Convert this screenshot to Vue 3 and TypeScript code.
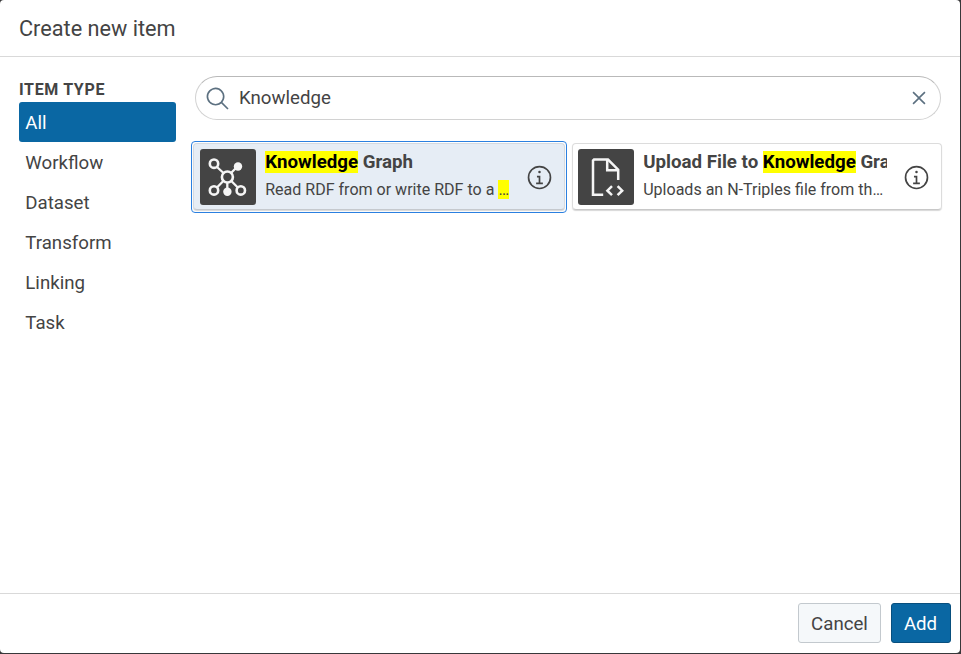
<script setup lang="ts">
import { ref } from 'vue'

interface Part { text: string; mark?: boolean }
interface Item { id: string; icon: 'graph' | 'file'; title: Part[]; description: Part[] }

const types: string[] = ['All', 'Workflow', 'Dataset', 'Transform', 'Linking', 'Task']
const activeType = ref('All')
const query = ref('Knowledge')
const selected = ref('graph')

const items: Item[] = [
  {
    id: 'graph',
    icon: 'graph',
    title: [{ text: 'Knowledge', mark: true }, { text: ' Graph' }],
    description: [{ text: 'Read RDF from or write RDF to a ' }, { text: '…', mark: true }],
  },
  {
    id: 'upload',
    icon: 'file',
    title: [{ text: 'Upload File to ' }, { text: 'Knowledge', mark: true }, { text: ' Graph' }],
    description: [{ text: 'Uploads an N-Triples file from th…' }],
  },
]
</script>

<template>
  <div class="backdrop">
    <section class="dialog" role="dialog" aria-label="Create new item">
      <header class="header"><h1>Create new item</h1></header>
      <main class="content">
        <nav class="types">
          <h2>Item type</h2>
          <button
            v-for="type in types"
            :key="type"
            class="type"
            :class="{ active: type === activeType }"
            @click="activeType = type"
          >{{ type }}</button>
        </nav>
        <div class="results">
          <label class="search">
            <svg class="search-icon" viewBox="0 0 32 32">
              <path d="M29,27.5859l-7.5521-7.5521a11.0177,11.0177,0,1,0-1.4141,1.4141L27.5859,29ZM4,13a9,9,0,1,1,9,9A9.01,9.01,0,0,1,4,13Z" />
            </svg>
            <input v-model="query" type="text" />
            <svg class="clear-icon" viewBox="0 0 32 32" @click="query = ''">
              <path d="M24 9.4L22.6 8 16 14.6 9.4 8 8 9.4 14.6 16 8 22.6 9.4 24 16 17.4 22.6 24 24 22.6 17.4 16z" />
            </svg>
          </label>
          <div class="cards">
            <div
              v-for="item in items"
              :key="item.id"
              class="slot"
              :class="{ selected: item.id === selected }"
              @click="selected = item.id"
            >
              <article class="card">
                <div class="tile">
                  <svg v-if="item.icon === 'graph'" viewBox="0 0 56 56">
                    <g fill="none" stroke="#f5f5f5" stroke-width="2.300">
                      <path d="M17 18l6.500 6M31 24l5-5M23.300 32L17 38.500M31.300 32l6.500 6.500M27.300 33.500V40" />
                      <circle cx="14" cy="14.700" r="4.200" stroke-width="2.600" />
                      <circle cx="14" cy="41.400" r="4.200" stroke-width="2.600" />
                      <circle cx="40.800" cy="41.400" r="4.200" stroke-width="2.600" />
                      <circle cx="27.400" cy="28" r="5.500" stroke-width="2.600" />
                    </g>
                    <g fill="#f5f5f5">
                      <circle cx="38" cy="17.500" r="4.200" />
                      <circle cx="27.400" cy="42.700" r="4.200" />
                    </g>
                  </svg>
                  <svg v-else viewBox="0 0 56 56">
                    <g fill="none" stroke="#f5f5f5" stroke-width="2.500">
                      <path d="M25.200 45.800H15V11.500L16 10.500H30L40.200 20.700V31" />
                      <path d="M29.200 10.500V21.300H40.200" />
                      <path d="M34 37.200L29.400 41.700L34 46.200M39.600 37.200L44.200 41.700L39.600 46.200" />
                    </g>
                  </svg>
                </div>
                <div class="text">
                  <h3><template v-for="(part, i) in item.title" :key="i"><mark v-if="part.mark">{{ part.text }}</mark><template v-else>{{ part.text }}</template></template></h3>
                  <p><template v-for="(part, i) in item.description" :key="i"><mark v-if="part.mark">{{ part.text }}</mark><template v-else>{{ part.text }}</template></template></p>
                </div>
                <svg class="info" viewBox="0 0 32 32">
                  <path d="M17 22L17 14 13 14 13 16 15 16 15 22 12 22 12 24 20 24 20 22zM16 8a1.5 1.5 0 101.5 1.5A1.5 1.5 0 0016 8z" />
                  <path d="M16,30A14,14,0,1,1,30,16,14,14,0,0,1,16,30ZM16,4A12,12,0,1,0,28,16,12,12,0,0,0,16,4Z" />
                </svg>
              </article>
            </div>
          </div>
        </div>
      </main>
      <footer class="footer">
        <button class="button">Cancel</button>
        <button class="button primary">Add</button>
      </footer>
    </section>
  </div>
</template>

<style>
body { margin: 0; background: #38383a; }
</style>

<style scoped>
.backdrop {
  box-sizing: border-box;
  height: 100vh;
  padding: 0 1px 1px 0;
  background: #38383a;
  color: #444;
  font-family: Roboto, "Liberation Sans", sans-serif;
}
.backdrop *, .backdrop *::before { box-sizing: border-box; }
h1, h2, h3, p { margin: 0; }
button, input { font: inherit; color: inherit; }
.dialog {
  display: flex;
  flex-direction: column;
  height: 100%;
  border-radius: 4px;
  background: #fff;
}
.header {
  display: flex;
  align-items: center;
  height: 57px;
  padding: 2px 19px 0;
  border-bottom: 1px solid #d9d9d9;
}
h1 { font-size: 21.7px; font-weight: 400; line-height: 28px; }
.content { flex: 1; display: flex; gap: 15px; padding: 19px 17px 0 19px; }
.types { width: 157px; }
h2 {
  padding-top: 2px;
  height: 26px;
  font-size: 16px;
  font-weight: 700;
  line-height: 23px;
  letter-spacing: .65px;
  text-transform: uppercase;
}
.type {
  display: block;
  width: 100%;
  height: 40px;
  padding: 2px 6.300px 0;
  border: 0;
  border-radius: 3px;
  background: none;
  font-size: 18.67px;
  text-align: left;
}
.type.active { background: #0a67a3; color: #fff; }
.results { flex: 1; min-width: 0; }
.search {
  display: flex;
  align-items: center;
  height: 44px;
  margin: 0 2px 0 4px;
  padding: 0 8px 0 9px;
  border: 1px solid #d2d2d2;
  border-top-color: #b9b9b9;
  border-radius: 22px;
}
.search-icon { width: 26px; height: 26px; margin-top: 1px; fill: #5c7080; }
.clear-icon { width: 26px; height: 26px; margin-top: -1px; fill: #5c7080; }
input {
  flex: 1;
  min-width: 0;
  padding: 0 0 0 8px;
  border: 0;
  outline: 0;
  background: none;
  font-size: 18.67px;
}
.cards { display: grid; grid-template-columns: 376px 372px; gap: 4px; margin-top: 21px; }
.slot { height: 72px; padding: 2px 1px 2px 1px; }
.slot.selected { padding: 1px; border: 1px solid #2b80e0; border-radius: 4px; }
.card {
  display: flex;
  align-items: center;
  height: 67px;
  padding: 0 11px 0 5px;
  border: 1px solid #dcdcdc;
  border-bottom-color: #c8c8c8;
  border-radius: 4px;
  box-shadow: 0 1px 1px rgba(0, 0, 0, .16);
}
.selected .card { padding-left: 6px; background: #e6edf5; border-color: #d5dae0; border-bottom-color: #c5c9ce; }
.tile { flex: none; width: 56px; height: 56px; border-radius: 3px; background: #444; }
.tile svg { display: block; width: 56px; height: 56px; }
.text { flex: 1; min-width: 0; padding: 0 0 3px 9.200px; white-space: nowrap; }
h3 { overflow: hidden; font-size: 18.7px; line-height: 28px; font-weight: 700; }
p { overflow: hidden; font-size: 16.05px; line-height: 27px; }
mark { background: #ff0; color: #000; }
p mark { color: inherit; }
.info { flex: none; width: 27px; height: 27px; margin: 1px 0 0 16px; fill: #444; }
.footer {
  display: flex;
  justify-content: flex-end;
  gap: 10px;
  height: 60px;
  padding: 9px 9px 0;
  border-top: 1px solid #d9d9d9;
}
.button {
  width: 83px;
  height: 40px;
  padding: 2px 0 0;
  border: 1px solid #c3c9ce;
  border-radius: 3px;
  background: #f5f8fa;
  font-size: 18.67px;
}
.button.primary { width: 60px; padding-right: 1px; border-color: #084f7e; background: #0a67a3; color: #fff; }
</style>
